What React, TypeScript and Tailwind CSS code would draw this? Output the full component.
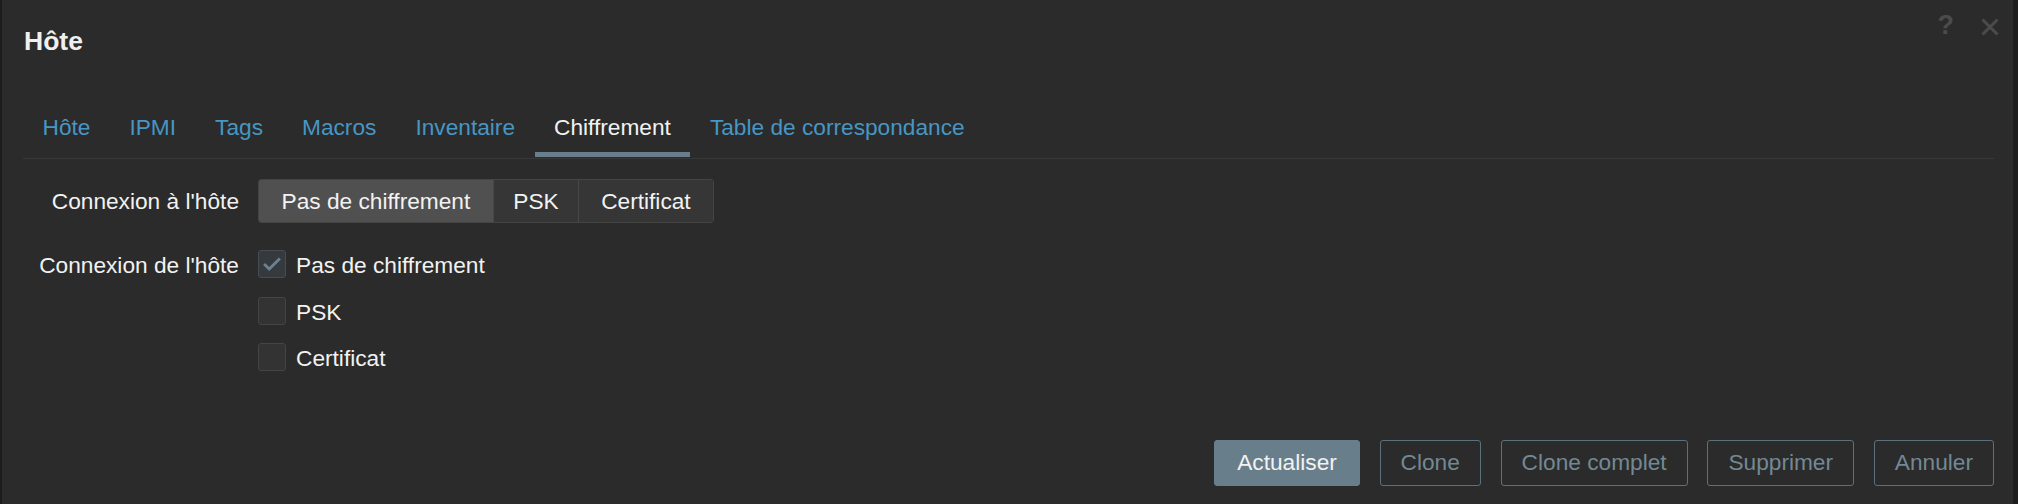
import { useState } from "react";

const tabs = ["Hôte", "IPMI", "Tags", "Macros", "Inventaire", "Chiffrement", "Table de correspondance"];
const modes = [
  { label: "Pas de chiffrement", pad: "px-[22.5px]" },
  { label: "PSK", pad: "px-[19.5px]" },
  { label: "Certificat", pad: "px-[22px]" },
];

function Checkbox({ checked, label }: { checked: boolean; label: string }) {
  return (
    <label className="flex items-center gap-[10px] h-[28px]">
      <span
        className={
          "w-[28px] h-[28px] rounded-[3px] border flex items-center justify-center " +
          (checked ? "bg-[#343a3e] border-[#464c51]" : "bg-[#333333] border-[#444444]")
        }
      >
        {checked && (
          <svg width="28" height="28" viewBox="0 0 28 28">
            <polyline points="5.5,14 11,19.5 22.5,8" fill="none" stroke="#6b8391" strokeWidth="3" />
          </svg>
        )}
      </span>
      <span className="mt-[3px] text-[22.7px] leading-[22.7px] text-[#f2f2f2]">{label}</span>
    </label>
  );
}

export default function App() {
  const [mode, setMode] = useState(0);

  return (
    <div className="w-[2018px] h-[504px] bg-[#1d1d1d] pl-[2px] font-['Liberation_Sans',Arial,sans-serif]">
      <div className="relative w-[2011px] h-[504px] bg-[#2b2b2b] flex flex-col pl-[21px] pr-[19px]">
        {/* header */}
        <h1 className="pt-[28px] pl-[1px] text-[26.5px] leading-[26px] font-bold text-[#f0f0f0]">Hôte</h1>
        <div className="absolute top-[12px] right-[14px] flex items-center gap-[27px] text-[#4b4b4b]">
          <span className="text-[27px] leading-[27px] font-bold">?</span>
          <svg width="18" height="18" viewBox="0 0 18 18" className="mt-[2px]">
            <path d="M1.5 1.5 L16.5 16.5 M16.5 1.5 L1.5 16.5" stroke="#4b4b4b" strokeWidth="3" />
          </svg>
        </div>

        {/* tabs */}
        <div className="mt-[62px] border-b border-[#383838] pb-[1px] flex">
          {tabs.map((t) => {
            const active = t === "Chiffrement";
            return (
              <div
                key={t}
                className={
                  "px-[19.5px] pb-[13.5px] text-[22.7px] leading-[22.5px] border-b-[5px] " +
                  (active ? "text-[#f2f2f2] border-[#687f8b]" : "text-[#4796c4] border-transparent")
                }
              >
                {t}
              </div>
            );
          })}
        </div>

        {/* form */}
        <div className="mt-[20px] flex flex-col gap-[27px]">
          <div className="flex items-center gap-[19px]">
            <div className="w-[216px] text-right text-[22.7px] leading-[22.5px] text-[#f2f2f2]">Connexion à l'hôte</div>
            <div className="flex h-[44px] rounded-[3px] border border-[#444444] overflow-hidden">
              {modes.map((m, i) => (
                <button
                  key={m.label}
                  onClick={() => setMode(i)}
                  className={
                    m.pad +
                    " text-[22.7px] leading-[22.5px] text-[#f2f2f2] " +
                    (i > 0 ? "border-l border-[#474747] " : "") +
                    (mode === i ? "bg-[#505050]" : "bg-[#363636]")
                  }
                >
                  {m.label}
                </button>
              ))}
            </div>
          </div>

          <div className="flex items-start gap-[19px]">
            <div className="w-[216px] h-[28px] pt-[3px] flex items-center justify-end text-[22.7px] leading-[22.5px] text-[#f2f2f2]">
              Connexion de l'hôte
            </div>
            <div className="flex flex-col gap-[18.5px]">
              <Checkbox checked label="Pas de chiffrement" />
              <Checkbox checked={false} label="PSK" />
              <Checkbox checked={false} label="Certificat" />
            </div>
          </div>
        </div>

        {/* footer */}
        <div className="mt-auto pb-[18px] flex justify-end gap-[19.75px]">
          <button className="h-[46px] px-[22px] pb-[2px] rounded-[3px] bg-[#687f8b] border border-[#687f8b] text-[22.7px] leading-[22.5px] text-[#f2f2f2]">
            Actualiser
          </button>
          {["Clone", "Clone complet", "Supprimer", "Annuler"].map((b) => (
            <button
              key={b}
              className="h-[46px] px-[20px] pb-[2px] rounded-[3px] border border-[#5d717c] text-[22.7px] leading-[22.5px] text-[#728995]"
            >
              {b}
            </button>
          ))}
        </div>
      </div>
    </div>
  );
}
